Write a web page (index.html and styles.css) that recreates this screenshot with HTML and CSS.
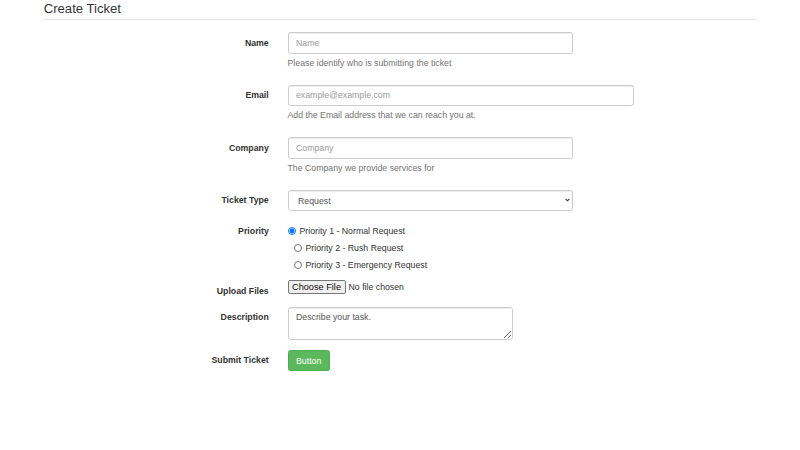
FILE: index.html
```html
<!DOCTYPE html>
<html>
<head>
<meta charset="utf-8">
<link rel="stylesheet" href="styles.css">
</head>
<body>
<div class="container">
  <form class="form">
    <div class="legend">Create Ticket</div>

    <div class="group">
      <label class="lbl" for="name">Name</label>
      <div class="field w5">
        <input id="name" class="ctl" type="text" placeholder="Name">
        <p class="help">Please identify who is submitting the ticket</p>
      </div>
    </div>

    <div class="group">
      <label class="lbl" for="email">Email</label>
      <div class="field w6">
        <input id="email" class="ctl" type="text" placeholder="example@example.com">
        <p class="help">Add the Email address that we can reach you at.</p>
      </div>
    </div>

    <div class="group">
      <label class="lbl" for="company">Company</label>
      <div class="field w5">
        <input id="company" class="ctl" type="text" placeholder="Company">
        <p class="help">The Company we provide services for</p>
      </div>
    </div>

    <div class="group">
      <label class="lbl" for="type">Ticket Type</label>
      <div class="field w5">
        <div class="sel-wrap">
          <select id="type" class="ctl sel">
            <option>Request</option>
          </select>
          <svg class="chev" width="5" height="4" viewBox="0 0 5 4"><path d="M0.6 0.9 L2.5 2.8 L4.4 0.9" fill="none" stroke="#333" stroke-width="1.1"/></svg>
        </div>
      </div>
    </div>

    <div class="group">
      <label class="lbl">Priority</label>
      <div class="field w6">
        <label class="radio first"><input type="radio" name="p" checked> Priority 1 - Normal Request</label>
        <label class="radio"><input type="radio" name="p"> Priority 2 - Rush Request</label>
        <label class="radio"><input type="radio" name="p"> Priority 3 - Emergency Request</label>
      </div>
    </div>

    <div class="group">
      <label class="lbl" for="files">Upload Files</label>
      <div class="field w6">
        <input id="files" class="file" type="file">
      </div>
    </div>

    <div class="group">
      <label class="lbl" for="desc">Description</label>
      <div class="field w4">
        <textarea id="desc" class="ctl area" rows="2">Describe your task.</textarea>
      </div>
    </div>

    <div class="group">
      <label class="lbl">Submit Ticket</label>
      <div class="field w4">
        <button type="button" class="btn">Button</button>
      </div>
    </div>
  </form>
</div>
</body>
</html>
```
FILE: styles.css
```css
html, body {
  margin: 0;
  padding: 0;
  background: #fff;
}
body {
  font-family: "Liberation Sans", Arial, Helvetica, sans-serif;
  font-size: 8.75px;
  line-height: 12.5px;
  color: #333;
}
.container {
  width: 712.5px;
  margin-left: 43.75px;
}
.legend {
  font-size: 13.125px;
  line-height: 18.75px;
  color: #333;
  border-bottom: 1px solid #e5e5e5;
  margin-bottom: 12.5px;
}
.group {
  display: flex;
  margin: 0 -9.375px 9.375px;
}
.lbl {
  box-sizing: border-box;
  width: 243.75px;
  padding: 4.375px 9.375px 0;
  text-align: right;
  font-weight: bold;
}
.field {
  box-sizing: border-box;
  padding: 0 9.375px;
}
.w4 { width: 243.75px; }
.w5 { width: 304.69px; }
.w6 { width: 365.6px; }
.ctl {
  display: block;
  box-sizing: border-box;
  width: 100%;
  height: 21.25px;
  margin: 0;
  padding: 3.75px 7.5px;
  font-family: inherit;
  font-size: 8.75px;
  line-height: 12.5px;
  color: #555;
  background: #fff;
  border: 1px solid #ccc;
  border-radius: 2.5px;
  box-shadow: inset 0 1px 1px rgba(0,0,0,.075);
  outline: none;
}
.ctl::placeholder { color: #999; }
.sel-wrap { position: relative; }
.sel {
  appearance: none;
  -webkit-appearance: none;
  padding: 3.75px 10px 3.75px 9.5px;
}
.chev {
  position: absolute;
  right: 3px;
  top: 8.5px;
}
.area {
  height: 33.75px;
  resize: vertical;
}
.help {
  margin: 3.125px 0 6.25px;
  color: #737373;
}
.radio {
  display: flex;
  align-items: flex-start;
  box-sizing: border-box;
  min-height: 16.875px;
  padding-top: 4.375px;
  padding-left: 6px;
  font-weight: normal;
  line-height: 12.5px;
}
.radio.first { padding-left: 0; }
.radio input {
  width: 8px;
  height: 8px;
  margin: 2.25px 4px 0 0;
  flex: none;
}
.file {
  display: block;
  font-family: inherit;
  font-size: 8.75px;
  line-height: 12px;
  margin: 0;
  color: #333;
}
.file::file-selector-button {
  font-family: inherit;
  font-size: 9.2px;
  padding: 1px 3.5px;
  margin-right: 3px;
  color: #111;
  background: #efefef;
  border: 1px solid #767676;
  border-radius: 2px;
}
.btn {
  display: inline-block;
  box-sizing: border-box;
  height: 21.25px;
  padding: 3.75px 7.5px;
  font-family: inherit;
  font-size: 8.75px;
  line-height: 12.5px;
  color: #fff;
  background: #5cb85c;
  border: 1px solid #4cae4c;
  border-radius: 2.5px;
}
```
